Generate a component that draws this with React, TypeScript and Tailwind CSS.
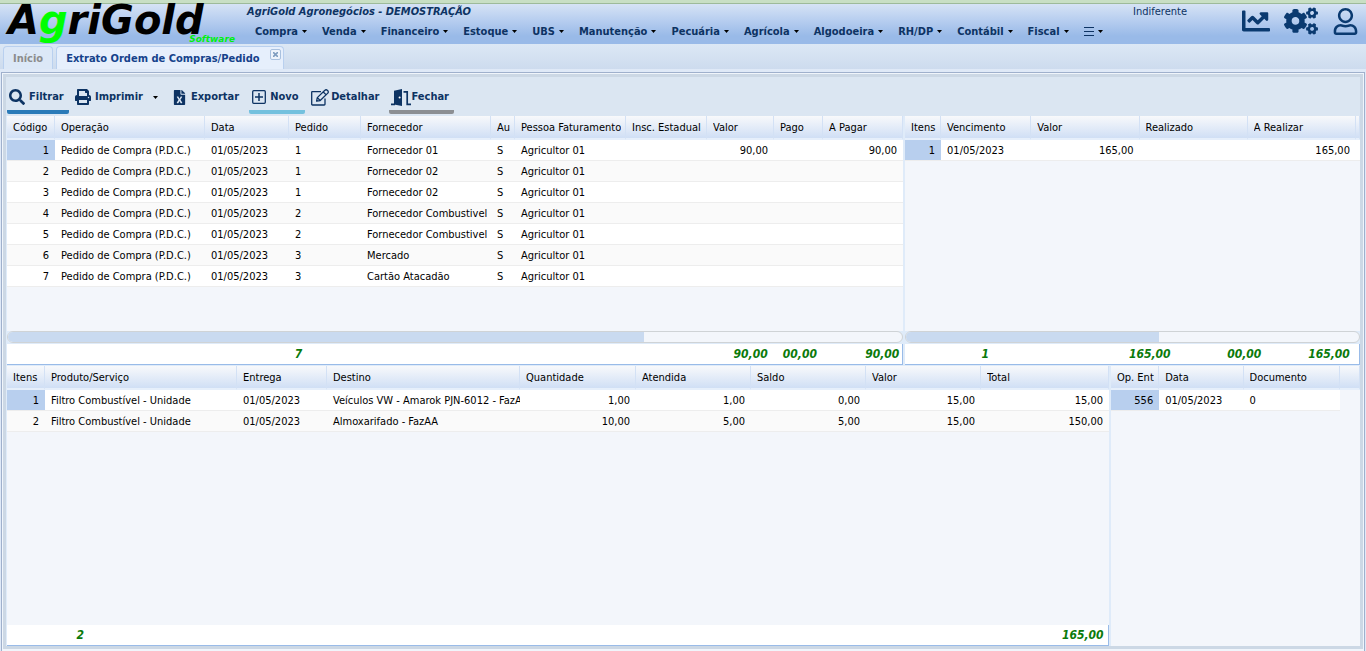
import React from "react";
import { FaChartLine, FaCogs, FaRegUser, FaSearch, FaPrint, FaFileExcel } from "react-icons/fa";

type Column = { title: string; width: string; right?: boolean };

const menus = [
  "Compra", "Venda", "Financeiro", "Estoque", "UBS", "Manutenção", "Pecuária",
  "Agrícola", "Algodoeira", "RH/DP", "Contábil", "Fiscal",
];

const orderColumns: Column[] = [
  { title: "Código", width: "w-[48px]", right: true },
  { title: "Operação", width: "w-[150px]" },
  { title: "Data", width: "w-[84px]" },
  { title: "Pedido", width: "w-[72px]" },
  { title: "Fornecedor", width: "w-[130px]" },
  { title: "Au", width: "w-[24px]" },
  { title: "Pessoa Faturamento", width: "w-[111px]" },
  { title: "Insc. Estadual", width: "w-[81px]" },
  { title: "Valor", width: "w-[67px]", right: true },
  { title: "Pago", width: "w-[49px]", right: true },
  { title: "A Pagar", width: "w-[80px]", right: true },
];

const op = "Pedido de Compra (P.D.C.)";
const day = "01/05/2023";
const orderRows = [
  ["1", op, day, "1", "Fornecedor 01", "S", "Agricultor 01", "", "90,00", "", "90,00"],
  ["2", op, day, "1", "Fornecedor 02", "S", "Agricultor 01", "", "", "", ""],
  ["3", op, day, "1", "Fornecedor 02", "S", "Agricultor 01", "", "", "", ""],
  ["4", op, day, "2", "Fornecedor Combustivel", "S", "Agricultor 01", "", "", "", ""],
  ["5", op, day, "2", "Fornecedor Combustivel", "S", "Agricultor 01", "", "", "", ""],
  ["6", op, day, "3", "Mercado", "S", "Agricultor 01", "", "", "", ""],
  ["7", op, day, "3", "Cartão Atacadão", "S", "Agricultor 01", "", "", "", ""],
];

const dueColumns: Column[] = [
  { title: "Itens", width: "w-[36px]", right: true },
  { title: "Vencimento", width: "w-[90px]" },
  { title: "Valor", width: "w-[108px]", right: true },
  { title: "Realizado", width: "w-[108px]", right: true },
  { title: "A Realizar", width: "w-[108px]", right: true },
  { title: "", width: "w-[4px]" },
];
const dueRows = [["1", day, "165,00", "", "165,00", ""]];

const itemColumns: Column[] = [
  { title: "Itens", width: "w-[38px]", right: true },
  { title: "Produto/Serviço", width: "w-[192px]" },
  { title: "Entrega", width: "w-[90px]" },
  { title: "Destino", width: "w-[193px]" },
  { title: "Quantidade", width: "w-[116px]", right: true },
  { title: "Atendida", width: "w-[115px]", right: true },
  { title: "Saldo", width: "w-[115px]", right: true },
  { title: "Valor", width: "w-[115px]", right: true },
  { title: "Total", width: "w-[128px]", right: true },
];
const itemRows = [
  ["1", "Filtro Combustível - Unidade", day, "Veículos VW - Amarok PJN-6012 - FazAA", "1,00", "1,00", "0,00", "15,00", "15,00"],
  ["2", "Filtro Combustível - Unidade", day, "Almoxarifado - FazAA", "10,00", "5,00", "5,00", "15,00", "150,00"],
];

const deliveryColumns: Column[] = [
  { title: "Op. Ent", width: "w-[48px]", right: true },
  { title: "Data", width: "w-[84px]" },
  { title: "Documento", width: "w-[96px]" },
  { title: "", width: "w-[20px]" },
];
const deliveryRows = [["556", day, "0"]];

function DataTable({ columns, rows, label }: { columns: Column[]; rows: string[][]; label: string }) {
  return (
    <table aria-label={label} className="w-full table-fixed border-separate border-spacing-0">
      <colgroup>
        {columns.map((c, i) => <col key={i} className={c.width} />)}
      </colgroup>
      <thead>
        <tr>
          {columns.map((c, i) => (
            <th
              key={i}
              className="h-6 overflow-hidden border-r border-b-2 border-r-[#d3e1f5] border-b-[#e6effb] bg-linear-to-b from-[#f8f9fb] to-[#d0dff5] px-0 pt-0.5 pb-0 text-left font-normal"
            >
              <div className="ml-1.5 mr-1 overflow-hidden whitespace-nowrap">{c.title}</div>
            </th>
          ))}
        </tr>
      </thead>
      <tbody>
        {rows.map((row, r) => (
          <tr key={r} className={r % 2 ? "bg-[#fafafa]" : "bg-white"}>
            {row.map((cell, i) => (
              <td
                key={i}
                className={`h-[21px] overflow-hidden whitespace-nowrap border-b border-[#ededed] pt-0.5 pb-0 ${
                  r === 0 && i === 0 ? "bg-[#b8cfee]" : ""
                } ${columns[i].right ? "pr-1.5 pl-0 text-right" : "pr-0 pl-1.5"}`}
              >
                {cell}
              </td>
            ))}
          </tr>
        ))}
      </tbody>
    </table>
  );
}

function ScrollTrack({ thumb }: { thumb: string }) {
  return (
    <div className="mb-px flex h-3 overflow-hidden rounded-md border border-[#cfd3d6] bg-[#f3f6fb]">
      <div className={`-my-px -ml-px bg-[#c9daf0] ${thumb}`} />
    </div>
  );
}

function Totals({ cells }: { cells: [string, string][] }) {
  return (
    <div className="flex h-[21px] items-center border-r border-b border-[#99bbe8] bg-white text-[12px] font-bold italic text-[#0b7a0b]">
      {cells.map(([value, width], i) => (
        <span key={i} className={`text-right ${width}`}>{value}</span>
      ))}
    </div>
  );
}

function Caret() {
  return (
    <svg width="5" height="3" viewBox="0 0 5 3" aria-hidden="true">
      <path d="M0 0h5L2.5 3z" fill="#000" />
    </svg>
  );
}

function PlusBox() {
  return (
    <svg width="14" height="14" viewBox="0 0 14 14" fill="none" stroke="currentColor" aria-hidden="true">
      <rect x="0.7" y="0.7" width="12.6" height="12.6" rx="1" strokeWidth="1.3" />
      <path d="M7 3v8M3 7h8" strokeWidth="1.5" />
    </svg>
  );
}

function PencilBox() {
  return (
    <svg width="18" height="17" viewBox="0 0 18 17" fill="none" stroke="currentColor" strokeWidth="1.3" strokeLinejoin="round" aria-hidden="true">
      <path d="M10 2.7H1.2a.5.5 0 0 0-.5.5v12a.8.8 0 0 0 .8.8h11.7a.8.8 0 0 0 .8-.8V9.5" />
      <path d="M5.6 12.2l.7-3.6 7.6-7.3a1.6 1.6 0 0 1 2.4 0l.5.5a1.6 1.6 0 0 1 0 2.3l-7.6 7.4zM12.3 3l2.9 2.9M6.3 8.6l2.9 2.9" />
    </svg>
  );
}

function DoorIcon() {
  return (
    <svg width="20" height="17" viewBox="0 0 20 17" aria-hidden="true">
      <path d="M3 1.8 11 0v17L3 15.6z" fill="currentColor" />
      <path d="M0 15.3h4M12.5 2.8h3.7v12.5H20" fill="none" stroke="currentColor" strokeWidth="1.7" />
      <circle cx="8.6" cy="8.4" r="1" fill="#fff" />
    </svg>
  );
}

export default function App() {
  return (
    <div className="flex min-h-screen flex-col bg-[#dfe9f7] font-['DejaVu_Sans_Condensed','DejaVu_Sans',sans-serif] text-[11px] leading-[14px] text-black">
      <div className="h-1 border-b border-[#9dba9a] bg-[#c8dfc4]" />
      <header className="flex h-10 bg-linear-to-b from-[#d6e3f5] via-[#b0c9ee] via-50% to-[#99bae8] to-80% text-[#0d3363]">
        <div className="relative w-[247px] shrink-0 pl-2">
          <div className="font-['DejaVu_Sans',sans-serif] text-[40px] leading-[32px] font-bold italic text-black">
            A<span className="text-[#00ff00]">g</span>riGold
          </div>
          <span className="absolute right-3 bottom-0 font-['DejaVu_Sans',sans-serif] text-[9px] leading-[9px] font-bold italic text-[#00f010]">
            Software
          </span>
        </div>
        <div className="flex min-w-0 flex-1 flex-col">
          <div className="flex h-4 items-center justify-between">
            <span className="font-bold italic">AgriGold Agronegócios - DEMOSTRAÇÃO</span>
            <span className="mr-[55px]">Indiferente</span>
          </div>
          <nav className="flex h-6 items-center gap-[15px] pb-px pl-2 font-bold">
            {menus.map((m) => (
              <button key={m} className="flex items-center gap-1">
                {m}
                <Caret />
              </button>
            ))}
            <button aria-label="Mais" className="flex items-center gap-1">
              <svg width="10" height="9" viewBox="0 0 10 9" stroke="currentColor" aria-hidden="true">
                <path d="M0 .5h10M0 4.5h10M0 8.5h10" />
              </svg>
              <Caret />
            </button>
          </nav>
        </div>
        <div className="flex w-[124px] shrink-0 items-center gap-3.5 pb-1.5 text-[#0a3a70]">
          <button aria-label="Gráficos"><FaChartLine size={28} /></button>
          <button aria-label="Configurações"><FaCogs size={34} /></button>
          <button aria-label="Usuário"><FaRegUser size={27} /></button>
        </div>
      </header>

      <div className="flex h-[25px] items-end gap-[3px] bg-linear-to-b from-[#dce8f5] to-[#cddbee] pl-[3px] font-bold">
        <button className="h-[23px] rounded-t border border-b-0 border-[#b9d0ef] bg-[#dce8f7] px-[9px] pt-0.5 text-[#8c8c8c]">Início</button>
        <div className="flex h-[23px] rounded-t border border-b-0 border-[#b9d0ef] bg-[#e6effc] pl-[9px] pr-0.5 text-[#15428b]">
          <button className="pt-0.5 pr-2.5">Extrato Ordem de Compras/Pedido</button>
          <button aria-label="Fechar aba" className="mt-0.5 flex size-[11px] items-center justify-center rounded-xs border border-[#a9c1df] bg-[#edf3fb] text-[#7f9dbf]">
            <svg width="5" height="5" viewBox="0 0 5 5" stroke="currentColor" strokeWidth="1.6" aria-hidden="true">
              <path d="M0 0l5 5M5 0L0 5" />
            </svg>
          </button>
        </div>
      </div>

      <main className="mx-px mt-[3px] flex flex-1 flex-col border border-b-0 border-[#9fb0cc] bg-[#f0f5fb] px-px pt-px pb-0.5">
        <div className="flex flex-1 flex-col border-[3px] border-[#ccd8e5] bg-[#dfebf9]">
          <div className="flex h-[39px] items-end bg-[#dbe6f2] px-px pb-0.5 font-bold text-[#0d3363]">
            <button className="flex h-8 w-[62px] items-center gap-1 rounded-b-xs border-b-4 border-[#2b7bb8] pt-0.5 pl-0.5"><FaSearch size={16} />Filtrar</button>
            <button className="ml-1.5 flex h-8 items-center gap-1 border-b-4 border-transparent pt-0.5">
              <FaPrint size={16} />Imprimir<span className="ml-1.5 flex"><Caret /></span>
            </button>
            <button className="ml-3.5 flex h-8 items-center gap-1 border-b-4 border-transparent pt-0.5"><FaFileExcel size={15} />Exportar</button>
            <button className="ml-2.5 flex h-8 w-14 items-center gap-1 rounded-b-xs border-b-4 border-[#74c1de] pt-0.5 pl-[3px]"><PlusBox />Novo</button>
            <button className="ml-1.5 flex h-8 items-center gap-0.5 border-b-4 border-transparent pt-0.5"><PencilBox />Detalhar</button>
            <button className="ml-2.5 flex h-8 w-[65px] items-center rounded-b-xs border-b-4 border-[#8c8f93] pt-0.5 pl-0.5"><DoorIcon />Fechar</button>
          </div>

          <div className="grid grid-cols-[896fr_455fr] gap-0.5 pl-px">
            <section className="flex min-w-0 flex-col">
              <div className="min-h-[215px] bg-[#f3f6fb]"><DataTable label="Pedidos" columns={orderColumns} rows={orderRows} /></div>
              <ScrollTrack thumb="w-[71.3%]" />
              <Totals cells={[["7", "w-[33%]"], ["90,00", "w-[52%]"], ["00,00", "w-[5.5%]"], ["90,00", "w-[9.2%]"]]} />
            </section>
            <section className="flex min-w-0 flex-col">
              <div className="min-h-[215px] bg-[#f3f6fb]"><DataTable label="Vencimentos" columns={dueColumns} rows={dueRows} /></div>
              <ScrollTrack thumb="w-[56%]" />
              <Totals cells={[["1", "w-[18.5%]"], ["165,00", "w-[40%]"], ["00,00", "w-[20%]"], ["165,00", "w-[19.5%]"]]} />
            </section>
          </div>

          <div className="mt-px grid flex-1 grid-cols-[1102fr_249fr] gap-0.5 pl-px">
            <section className="flex min-w-0 flex-col">
              <div className="flex-1 bg-[#f3f6fb]"><DataTable label="Itens do pedido" columns={itemColumns} rows={itemRows} /></div>
              <Totals cells={[["2", "w-[7%]"], ["165,00", "w-[92.6%]"]]} />
            </section>
            <section className="min-w-0 bg-[#f3f6fb]">
              <DataTable label="Entregas" columns={deliveryColumns} rows={deliveryRows} />
            </section>
          </div>
        </div>
      </main>
    </div>
  );
}
